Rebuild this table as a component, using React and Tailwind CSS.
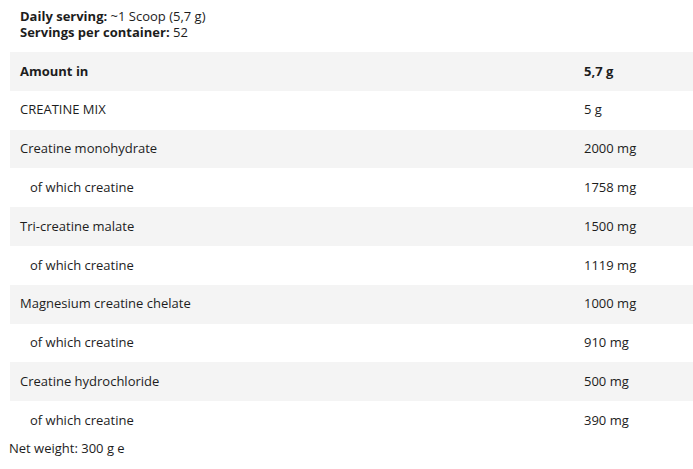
import React from 'react';

const rows = [
  { name: 'CREATINE MIX', value: '5 g' },
  { name: 'Creatine monohydrate', value: '2000 mg' },
  { name: 'of which creatine', value: '1758 mg', sub: true },
  { name: 'Tri-creatine malate', value: '1500 mg' },
  { name: 'of which creatine', value: '1119 mg', sub: true },
  { name: 'Magnesium creatine chelate', value: '1000 mg' },
  { name: 'of which creatine', value: '910 mg', sub: true },
  { name: 'Creatine hydrochloride', value: '500 mg' },
  { name: 'of which creatine', value: '390 mg', sub: true },
];

export default function App() {
  return (
    <div
      className="w-[693px] h-[469px] bg-white text-[#1d1d1d] text-[13px] overflow-hidden"
      style={{ fontFamily: '"Open Sans", sans-serif' }}
    >
      <div className="pt-[8px] pl-5 leading-[16px]">
        <p>
          <span className="font-bold">Daily serving:</span> ~1 Scoop (5,7 g)
        </p>
        <p>
          <span className="font-bold">Servings per container:</span> 52
        </p>
      </div>

      <div className="ml-[10px] mt-[12px] w-[683px] flex flex-col">
        <div className="bg-[#f4f4f4] h-[38.8px] font-bold flex items-center">
          <div className="pl-[10px] w-[564px]">Amount in</div>
          <div className="pl-[10px]">5,7 g</div>
        </div>
        {rows.map((r, i) => (
          <div
            key={i}
            className={`h-[38.8px] flex items-center ${i % 2 === 1 ? 'bg-[#f4f4f4]' : 'bg-white'}`}
          >
            <div className={`w-[564px] ${r.sub ? 'pl-5' : 'pl-[10px]'}`}>{r.name}</div>
            <div className="pl-[10px]">{r.value}</div>
          </div>
        ))}
      </div>

      <p className="pl-[9px] leading-[16px]">Net weight: 300 g e</p>
    </div>
  );
}
